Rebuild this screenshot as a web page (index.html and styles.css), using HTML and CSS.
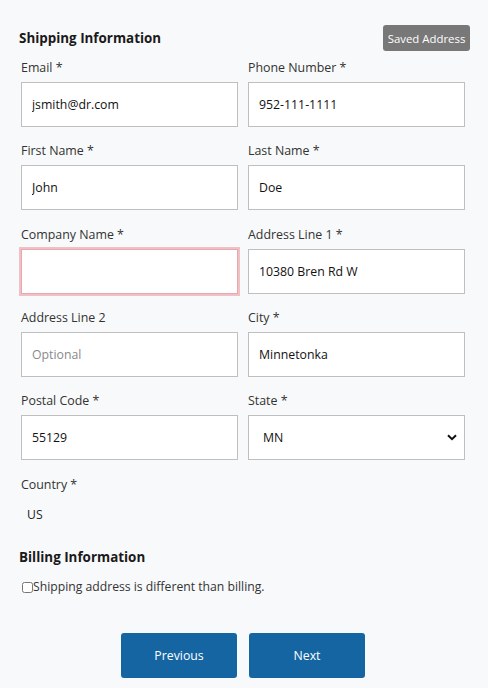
FILE: index.html
```html
<!DOCTYPE html>
<html lang="en">
<head>
<meta charset="utf-8">
<title>Shipping Information</title>
<link rel="stylesheet" href="styles.css">
</head>
<body>
<div class="page">
  <div class="header">
    <h2 class="section-title">Shipping Information</h2>
    <button class="btn-saved" type="button">Saved Address</button>
  </div>
  <div class="grid">
    <div class="field">
      <label class="label">Email *</label>
      <input class="input" type="text" value="jsmith@dr.com">
    </div>
    <div class="field">
      <label class="label">Phone Number *</label>
      <input class="input" type="text" value="952-111-1111">
    </div>
    <div class="field">
      <label class="label">First Name *</label>
      <input class="input" type="text" value="John">
    </div>
    <div class="field">
      <label class="label">Last Name *</label>
      <input class="input" type="text" value="Doe">
    </div>
    <div class="field">
      <label class="label">Company Name *</label>
      <input class="input invalid" type="text" value="">
    </div>
    <div class="field">
      <label class="label">Address Line 1 *</label>
      <input class="input" type="text" value="10380 Bren Rd W">
    </div>
    <div class="field">
      <label class="label">Address Line 2</label>
      <input class="input" type="text" placeholder="Optional">
    </div>
    <div class="field">
      <label class="label">City *</label>
      <input class="input" type="text" value="Minnetonka">
    </div>
    <div class="field">
      <label class="label">Postal Code *</label>
      <input class="input" type="text" value="55129">
    </div>
    <div class="field">
      <label class="label">State *</label>
      <div class="select-wrap">
        <select class="input select"><option>MN</option></select>
        <svg class="chevron" width="10" height="7" viewBox="0 0 10 7"><path d="M1 1.2 L5 5.2 L9 1.2" fill="none" stroke="#111" stroke-width="2"/></svg>
      </div>
    </div>
  </div>
  <div class="country">
    <div class="label">Country *</div>
    <div class="country-value">US</div>
  </div>
  <h2 class="section-title billing">Billing Information</h2>
  <label class="check-row"><input class="check" type="checkbox">Shipping address is different than billing.</label>
  <div class="actions">
    <button class="btn-primary" type="button">Previous</button>
    <button class="btn-primary" type="button">Next</button>
  </div>
</div>
</body>
</html>
```
FILE: styles.css
```css
* { box-sizing: border-box; }
html, body { margin: 0; padding: 0; background: #f8f9fa; }
body { font-family: "Open Sans", "Noto Sans", sans-serif; color: #212529; font-size: 12.2px; }
.page { padding: 25px 18px 10px 19px; }
.header { display: flex; justify-content: space-between; align-items: center; height: 26px; }
.section-title { margin: 0; font-size: 13.4px; font-weight: 700; color: #1a1a1a; line-height: 20px; }
.btn-saved { background: #787878; color: #fff; border: 0; border-radius: 3px; height: 26px; width: 87px; padding: 0; font-family: inherit; font-size: 11.4px; }
.grid { display: grid; grid-template-columns: 217px 217px; column-gap: 10px; row-gap: 12.3px; margin: 5px 0 0 2px; }
.field { display: flex; flex-direction: column; }
.label { display: block; line-height: 23px; height: 20px; margin-bottom: 6px; color: #333; font-size: 12.4px; }
.input { height: 45px; width: 100%; border: 1px solid #bfbfbf; background: #fff; padding: 0 10px; font-family: inherit; font-size: 12.3px; color: #111; border-radius: 0; outline: none; }
.input::placeholder { color: #8a8a8a; }
.input.invalid { border-color: #e4a9af; box-shadow: 0 0 0 2px #f0c0c5; }
.select-wrap { position: relative; }
.select { appearance: none; -webkit-appearance: none; padding-left: 14px; }
.chevron { position: absolute; right: 8px; top: 19px; pointer-events: none; }
.country { margin: 13px 0 0 2px; }
.country-value { margin-top: 12px; padding-left: 6px; line-height: 20px; color: #222; }
.billing { margin-top: 22px; }
.check-row { display: flex; align-items: center; margin-top: 10px; font-size: 12.2px; color: #333; line-height: 20px; }
.check { width: 11px; height: 11px; margin: 0 0 0 3px; }
.actions { display: flex; justify-content: center; gap: 12px; margin-top: 36px; padding-right: 3px; }
.btn-primary { width: 116px; height: 45px; background: #1565a3; color: #fff; border: 0; border-radius: 3px; font-family: inherit; font-size: 12.3px; }
```
